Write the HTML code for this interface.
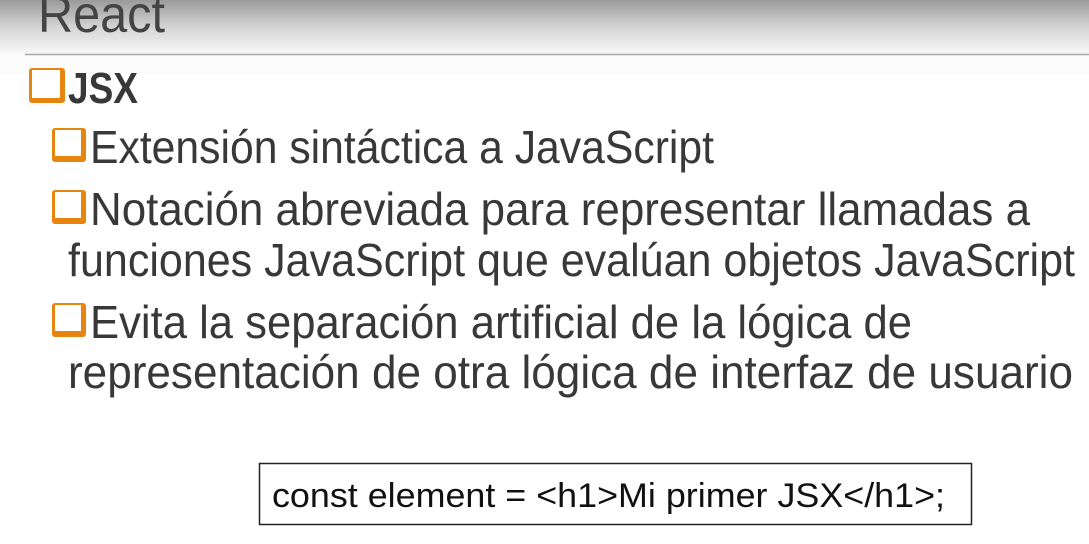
<!DOCTYPE html>
<html><head><meta charset="utf-8"><style>
html,body{margin:0;padding:0;width:1089px;height:544px;overflow:hidden;background:#fff}
</style></head><body>
<svg width="1089" height="544" xmlns="http://www.w3.org/2000/svg" style="position:absolute;left:0;top:0">
<defs><linearGradient id="g" x1="0" y1="0" x2="0" y2="1">
<stop offset="0" stop-color="#9a9a9a"/><stop offset="0.5" stop-color="#d4d4d4"/><stop offset="1" stop-color="#f8f8f8"/></linearGradient></defs>
<rect x="0" y="0" width="1089" height="54" fill="url(#g)"/>
<rect x="0" y="54" width="1089" height="20" fill="#fcfcfc"/>
<line x1="25" y1="54.5" x2="1089" y2="54.5" stroke="#a8a8a8" stroke-width="1.5"/>
<text x="38" y="32" font-family="Liberation Sans, sans-serif" font-size="52" fill="#444" textLength="127" lengthAdjust="spacingAndGlyphs">React</text>
<g font-family="Liberation Sans, sans-serif" fill="#383838">
<rect x="29" y="68" width="36" height="35" rx="3" fill="#e8850f"/><rect x="32" y="70" width="28" height="28" fill="#fff"/>
<text x="68" y="103" font-size="44" font-weight="bold" textLength="70" lengthAdjust="spacingAndGlyphs">JSX</text>
<rect x="52" y="128" width="34" height="34" rx="3" fill="#e8850f"/><rect x="55" y="130" width="26" height="26" fill="#fff"/>
<text x="90" y="163" font-size="46" textLength="624" lengthAdjust="spacingAndGlyphs">Extensión sintáctica a JavaScript</text>
<rect x="52" y="190" width="34" height="34" rx="3" fill="#e8850f"/><rect x="55" y="192" width="26" height="26" fill="#fff"/>
<text x="90" y="225" font-size="46" textLength="940" lengthAdjust="spacingAndGlyphs">Notación abreviada para representar llamadas a</text>
<text x="68" y="276" font-size="46" textLength="1007" lengthAdjust="spacingAndGlyphs">funciones JavaScript que evalúan objetos JavaScript</text>
<rect x="52" y="303" width="34" height="34" rx="3" fill="#e8850f"/><rect x="55" y="305" width="26" height="26" fill="#fff"/>
<text x="90" y="338" font-size="46" textLength="822" lengthAdjust="spacingAndGlyphs">Evita la separación artificial de la lógica de</text>
<text x="68" y="388" font-size="46" textLength="1005" lengthAdjust="spacingAndGlyphs">representación de otra lógica de interfaz de usuario</text>
</g>
<rect x="259.5" y="463.5" width="712" height="61" fill="#fff" stroke="#222" stroke-width="1.5"/>
<text x="272" y="507" font-family="Liberation Sans, sans-serif" font-size="34" fill="#111" textLength="673" lengthAdjust="spacingAndGlyphs">const element = &lt;h1&gt;Mi primer JSX&lt;/h1&gt;;</text>
</svg>
</body></html>
